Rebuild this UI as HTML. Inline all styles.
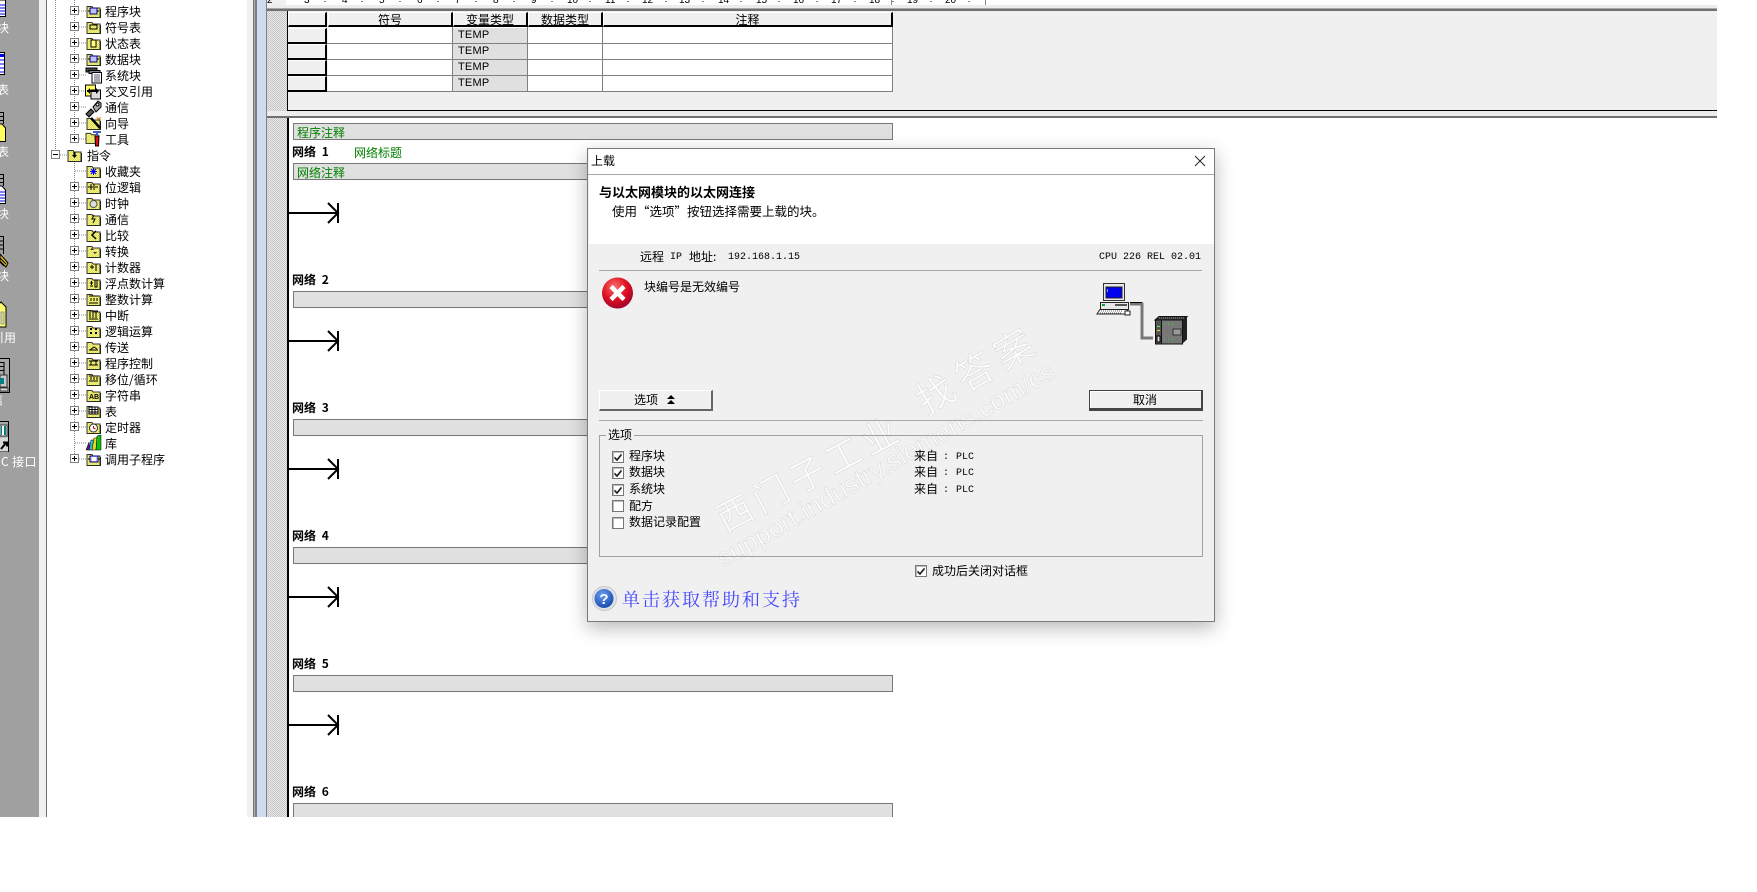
<!DOCTYPE html>
<html><head><meta charset="utf-8"><title>上载</title>
<style>
html,body{margin:0;padding:0;background:#fff}
body{width:1757px;height:892px;overflow:hidden;position:relative;font:12px/16px "WenQuanYi Zen Hei","Noto Sans CJK SC",sans-serif;color:#000}
div,span,svg{position:absolute}
.r{left:0;right:0;white-space:nowrap}
.tree span{white-space:nowrap;line-height:16px;height:16px}
.t{left:105px;margin-top:1px;white-space:nowrap}
.w{color:#fff;white-space:nowrap;line-height:16px}
.th{background:#f0f0f0;border-top:1px solid #fff;border-left:1px solid #fff;border-right:2px solid #000;border-bottom:2px solid #000;box-sizing:border-box;height:15px;text-align:center;line-height:13px;top:12px}
.rh{left:288px;width:39px;height:16px;background:#f0f0f0;border-right:2px solid #000;border-bottom:2px solid #000;border-top:1px solid #fff;box-sizing:border-box}
.temp{left:453px;width:74px;height:15px;background:#e0e0e0;font:11px/15px "Liberation Sans",sans-serif;letter-spacing:.2px;padding-left:5px;box-sizing:border-box}
.h{background:#808080;height:1px}
.v{background:#808080;width:1px}
.box{left:293px;width:600px;height:17px;background:#e0e0e0;border:1px solid #777;box-sizing:border-box}
.g{color:#008000;line-height:15px;white-space:nowrap}
.net{left:292px;font-weight:bold;white-space:nowrap;line-height:16px;word-spacing:3px}
.m{font-family:"Liberation Mono",monospace;font-size:10px;white-space:nowrap;line-height:14px}
.rd{font:10px/12px "Liberation Sans",sans-serif;top:-5px}
.dg{white-space:nowrap;line-height:16px;font-size:12px}
.cb{width:12px;height:12px;background:#fff;border:1px solid #777;box-sizing:border-box;box-shadow:inset 1px 1px 0 #bbb}
.btn{background:#f0f0f0;box-sizing:border-box;border-top:1px solid #fff;border-left:1px solid #fff;border-right:2px solid #666;border-bottom:2px solid #666;height:21px;top:390px}
.wm{color:#fcfcfc;-webkit-text-stroke:.6px #dadada;white-space:nowrap;transform-origin:0 50%}
</style></head><body>
<svg width="0" height="0" style="left:0;top:0">
<defs>
<pattern id="d" width="2" height="2" patternUnits="userSpaceOnUse"><rect width="2" height="2" fill="#ffff40"/><rect width="1" height="1" fill="#d4d49c"/><rect x="1" y="1" width="1" height="1" fill="#d4d49c"/></pattern>
<pattern id="dg" width="2" height="2" patternUnits="userSpaceOnUse"><rect width="2" height="2" fill="#c6c6c6"/><rect width="1" height="1" fill="#e8e8e8"/><rect x="1" y="1" width="1" height="1" fill="#e8e8e8"/></pattern>
<symbol id="f" viewBox="0 0 15 13"><path d="M1 3V1.500h5L7 3h7v9.500H1z" fill="url(#d)" stroke="#333"/><path d="M14.500 4v9H2" fill="none" stroke="#222"/></symbol>
</defs></svg>

<!-- left grey strip -->
<div style="left:0;top:0;width:39px;height:817px;background:#a0a0a0"></div>
<div style="left:39px;top:0;width:7px;height:817px;background:#f0f0f0"></div>
<div style="left:46px;top:0;width:1px;height:817px;background:#707070"></div>

<svg style="left:0;top:0" width="39" height="470">
<g fill="#fff" stroke="#000"><path d="M-5 0H5.500V16.500H-5z"/><path d="M-5 52.500H4.500V74.500H-5z"/></g>
<path d="M0 54h4v3H0z" fill="#00f"/>
<path d="M0 5h5M0 8h5M0 11h5M0 14h5M0 60h4M0 64h4M0 68h4M0 72h4" stroke="#00f"/>
<path d="M0 112.500h3.500V124M0 116.500h3.500M0 120.500h3.500" fill="none" stroke="#000"/>
<path d="M-3 124h5l3.500 4v13.500H-3z" fill="#ffff60" stroke="#000"/>
<path d="M0 174.500h3.500V186M0 178.500h3.500M0 182.500h3.500" fill="none" stroke="#000"/>
<path d="M-3 186h5l3.500 4v13.500H-3z" fill="#fff" stroke="#000"/>
<path d="M0 192h5M0 195h5M0 198h5M0 201h5" stroke="#00f"/>
<path d="M0 236.500h3.500V254M0 241h3.500M0 245h3.500M0 249h3.500" fill="none" stroke="#000"/>
<path d="M0 254l8 9-2 4-6-6z" fill="#e8c020" stroke="#000"/>
<path d="M0 258l6 6M0 262l4 4" stroke="#000"/>
<path d="M-3 306l4-4 5 5v20H-3z" fill="#ffff70" stroke="#000"/>
<path d="M1 312h3v12H1z" fill="#d8d890" stroke="#999"/>
<path d="M0 358.500H9.500V392.500H0" fill="#a8a8a8" stroke="#000"/>
<path d="M0 362.500h4V375M0 366.500h4M0 370.500h4" fill="none" stroke="#000"/>
<path d="M0 375h7v12H0z" fill="#c8c8c8" stroke="#333"/><path d="M0 378h4v6H0z" fill="#008080"/>
<path d="M0 388h8v3H0z" fill="#ddd" stroke="#333"/>
<path d="M0 421.500H8.500V451.500H0" fill="#a8a8a8" stroke="#000"/>
<path d="M0 425h7v11H0z" fill="#fff" stroke="#333"/><path d="M1 426h1v9H1zM4 426h2v9H4z" fill="#008080"/>
<path d="M0 437.500h8v14H0z" fill="#d8d8d8"/><path d="M1 449l5-6M3 442.500h4v4" fill="none" stroke="#000" stroke-width="2"/>
</svg>
<span class="w" style="left:-3px;top:20px">块</span>
<span class="w" style="left:-3px;top:82px">表</span>
<span class="w" style="left:-3px;top:144px">表</span>
<span class="w" style="left:-3px;top:206px">块</span>
<span class="w" style="left:-3px;top:268px">块</span>
<span class="w" style="left:-8px;top:330px">引用</span>
<span class="w" style="left:-9px;top:392px">信</span>
<span class="w" style="left:-7px;top:454px;letter-spacing:.4px">PC 接口</span>

<!-- tree -->
<div class="tree" style="left:47px;top:0;width:200px;height:817px;background:#fff"></div>
<svg style="left:47px;top:0" width="200" height="470">
<g transform="translate(-47 0)">
<path d="M55.500 0V150M55.500 155H60M74.500 0V139M74.500 163V459M60 155h7" stroke="#888" stroke-dasharray="1 1" fill="none"/>
<path d="M79 11h7M79 27h7M79 43h7M79 59h7M79 75h7M79 91h7M79 107h7M79 123h7M79 139h7M75 171h11M79 187h7M79 203h7M79 219h7M79 235h7M79 251h7M79 267h7M79 283h7M79 299h7M79 315h7M79 331h7M79 347h7M79 363h7M79 379h7M79 395h7M79 411h7M79 427h7M75 443h11M79 459h7" stroke="#888" stroke-dasharray="1 1"/>
<g fill="#fff" stroke="#808080">
<rect x="70.500" y="6.500" width="8" height="8"/><rect x="70.500" y="22.500" width="8" height="8"/><rect x="70.500" y="38.500" width="8" height="8"/><rect x="70.500" y="54.500" width="8" height="8"/><rect x="70.500" y="70.500" width="8" height="8"/><rect x="70.500" y="86.500" width="8" height="8"/><rect x="70.500" y="102.500" width="8" height="8"/><rect x="70.500" y="118.500" width="8" height="8"/><rect x="70.500" y="134.500" width="8" height="8"/>
<rect x="51.500" y="150.500" width="8" height="8"/>
<rect x="70.500" y="182.500" width="8" height="8"/><rect x="70.500" y="198.500" width="8" height="8"/><rect x="70.500" y="214.500" width="8" height="8"/><rect x="70.500" y="230.500" width="8" height="8"/><rect x="70.500" y="246.500" width="8" height="8"/><rect x="70.500" y="262.500" width="8" height="8"/><rect x="70.500" y="278.500" width="8" height="8"/><rect x="70.500" y="294.500" width="8" height="8"/><rect x="70.500" y="310.500" width="8" height="8"/><rect x="70.500" y="326.500" width="8" height="8"/><rect x="70.500" y="342.500" width="8" height="8"/><rect x="70.500" y="358.500" width="8" height="8"/><rect x="70.500" y="374.500" width="8" height="8"/><rect x="70.500" y="390.500" width="8" height="8"/><rect x="70.500" y="406.500" width="8" height="8"/><rect x="70.500" y="422.500" width="8" height="8"/><rect x="70.500" y="454.500" width="8" height="8"/>
</g>
<path stroke="#000" d="M72 10.500h5M74.500 8v5M72 26.500h5M74.500 24v5M72 42.500h5M74.500 40v5M72 58.500h5M74.500 56v5M72 74.500h5M74.500 72v5M72 90.500h5M74.500 88v5M72 106.500h5M74.500 104v5M72 122.500h5M74.500 120v5M72 138.500h5M74.500 136v5M53 154.500h5M72 186.500h5M74.500 184v5M72 202.500h5M74.500 200v5M72 218.500h5M74.500 216v5M72 234.500h5M74.500 232v5M72 250.500h5M74.500 248v5M72 266.500h5M74.500 264v5M72 282.500h5M74.500 280v5M72 298.500h5M74.500 296v5M72 314.500h5M74.500 312v5M72 330.500h5M74.500 328v5M72 346.500h5M74.500 344v5M72 362.500h5M74.500 360v5M72 378.500h5M74.500 376v5M72 394.500h5M74.500 392v5M72 410.500h5M74.500 408v5M72 426.500h5M74.500 424v5M72 458.500h5M74.500 456v5"/>
<!-- folders -->
<g>
<use href="#f" x="86" y="5" width="15" height="13"/><use href="#f" x="86" y="21" width="15" height="13"/><use href="#f" x="86" y="37" width="15" height="13"/><use href="#f" x="86" y="53" width="15" height="13"/>
<use href="#f" x="67" y="149" width="15" height="13"/>
<use href="#f" x="86" y="165" width="15" height="13"/><use href="#f" x="86" y="181" width="15" height="13"/><use href="#f" x="86" y="197" width="15" height="13"/><use href="#f" x="86" y="213" width="15" height="13"/><use href="#f" x="86" y="229" width="15" height="13"/><use href="#f" x="86" y="245" width="15" height="13"/><use href="#f" x="86" y="261" width="15" height="13"/><use href="#f" x="86" y="277" width="15" height="13"/><use href="#f" x="86" y="293" width="15" height="13"/><use href="#f" x="86" y="309" width="15" height="13"/><use href="#f" x="86" y="325" width="15" height="13"/><use href="#f" x="86" y="341" width="15" height="13"/><use href="#f" x="86" y="357" width="15" height="13"/><use href="#f" x="86" y="373" width="15" height="13"/><use href="#f" x="86" y="389" width="15" height="13"/><use href="#f" x="86" y="405" width="15" height="13"/><use href="#f" x="86" y="421" width="15" height="13"/><use href="#f" x="86" y="453" width="15" height="13"/>
</g>
<!-- folder inner glyphs -->
<path d="M90 8h7v6h-7z" fill="#c0c0ff" stroke="#000080"/><path d="M88 11h2M97 11h2" stroke="#000"/>
<path d="M90 25h7v4h-7z" fill="none" stroke="#000"/>
<path d="M91 40h5v7h-5z" fill="#ffff80" stroke="#000"/>
<path d="M90 56h7v6h-7z" fill="#c0c0ff" stroke="#000080"/><path d="M88 59h2M97 59h2" stroke="#000"/>
<path d="M72 155l2.500 3 2.500-3zM73.500 152h2v3h-2z" fill="#000"/>
<path d="M93.500 168v7M90 171.500h7M91 169l5 5M96 169l-5 5" stroke="#00f"/>
<path d="M88 187h5M91 184v6M94 184v6M95 187h3" stroke="#000" fill="none"/>
<circle cx="93.500" cy="204" r="3.500" fill="#ddd" stroke="#555"/>
<path d="M94 215l-2 4h3l-2 4" fill="none" stroke="#000"/>
<path d="M96 231l-4 4 4 4" fill="none" stroke="#000" stroke-width="1.500"/>
<path d="M90 250l2-2 2 2zM93 252h4l-2 2z" fill="#333"/>
<path d="M90 267h4M92 265v4M96 264v7" stroke="#000"/>
<path d="M90 283h3M91.500 281v4M90 286h3M95 280h2v7h-2z" stroke="#000" fill="none"/>
<path d="M89 296h9M89 303h9M91 298v3M94 298v3M97 298v3" stroke="#000"/>
<path d="M90 312v6M93 312v6M96 312v6M89 311h9M89 319h9" stroke="#000"/>
<path d="M90 328h2v2h-2zM95 328h2v2h-2zM90 332h2v2h-2zM95 332h2v2h-2z" fill="#000"/>
<path d="M90 350l4-3 3 2" stroke="#000" fill="none"/><path d="M89 350h9" stroke="#000"/>
<path d="M89 361h9M89 365h9M91 361v4M96 361v4" stroke="#000" fill="none"/>
<path d="M89 376h9M89 381h9M91 377v3M94 377v3M97 377v3" stroke="#000"/>
<text x="89" y="399" style="font:bold 7px 'Liberation Sans',sans-serif">AB</text>
<path d="M89 407h9v7h-9zM89 409.500h9M89 412h9M92 407v7M95 407v7" fill="#fff" stroke="#000"/>
<circle cx="93.500" cy="428" r="4" fill="#fff" stroke="#333"/><path d="M93.500 426v2l2 1" stroke="#c00" fill="none"/>
<path d="M90 456h8v6h-8z" fill="#c0c0ff" stroke="#000080"/><path d="M92 457h4v4h-4z" fill="#fff"/><path d="M88 459h2M98 459h2" stroke="#000"/>
<!-- system block -->
<path d="M86 68h11v4h-11z" fill="#444" stroke="#000"/>
<path d="M89 70.500h11v3h-11z" fill="#888" stroke="#000"/>
<path d="M92 72.500h9.500v10.500h-9.500z" fill="#fff" stroke="#000"/><path d="M94 75h6M94 77h6M94 79h6M94 81h6" stroke="#557"/>
<!-- cross ref -->
<path d="M85.500 85h10v11h-10z" fill="#ffff60" stroke="#000"/><path d="M91 90h9.500v9H91z" fill="#ddd" stroke="#000"/>
<path d="M87 91h11" stroke="#000" stroke-width="2"/><path d="M90 88l-3 3 3 3zM96 88l3 3-3 3z" fill="#000"/>
<!-- comm -->
<path d="M86 114l5-5 3 3-5 5z" fill="#555" stroke="#000"/><path d="M93 107l5-6 3 2 0 4-5 5z" fill="#aaa" stroke="#000"/><circle cx="97.500" cy="104.500" r="1.500" fill="#fff" stroke="#000"/>
<!-- wizard -->
<use href="#f" x="86" y="117" width="15" height="13"/><path d="M91 118l9 10" stroke="#000" stroke-width="2.500"/><path d="M97 117l1 2 2-1-1 2" stroke="#c80" fill="none"/>
<!-- tools -->
<use href="#f" x="85" y="132" width="14" height="12"/><path d="M95 136h4l-.5 10h-3z" fill="#e01010" stroke="#000"/><path d="M93 132h8M97 131v5" stroke="#4060c0" stroke-width="2"/>
<!-- lib -->
<path d="M86 450l3-8 1 8z" fill="#800080" stroke="#000" stroke-width=".5"/><path d="M89 450l2-10h3l-1 10z" fill="#20c0d0" stroke="#000" stroke-width=".5"/><path d="M92 450l2-12h3l-1 12z" fill="#e8d820" stroke="#000" stroke-width=".5"/><path d="M96 450l1-14 4-1v15z" fill="#10c010" stroke="#000" stroke-width=".5"/>
</g></svg>
<span class="t" style="top:3px">程序块</span>
<span class="t" style="top:19px">符号表</span>
<span class="t" style="top:35px">状态表</span>
<span class="t" style="top:51px">数据块</span>
<span class="t" style="top:67px">系统块</span>
<span class="t" style="top:83px">交叉引用</span>
<span class="t" style="top:99px">通信</span>
<span class="t" style="top:115px">向导</span>
<span class="t" style="top:131px">工具</span>
<span style="left:87px;top:148px;white-space:nowrap">指令</span>
<span class="t" style="top:163px">收藏夹</span>
<span class="t" style="top:179px">位逻辑</span>
<span class="t" style="top:195px">时钟</span>
<span class="t" style="top:211px">通信</span>
<span class="t" style="top:227px">比较</span>
<span class="t" style="top:243px">转换</span>
<span class="t" style="top:259px">计数器</span>
<span class="t" style="top:275px">浮点数计算</span>
<span class="t" style="top:291px">整数计算</span>
<span class="t" style="top:307px">中断</span>
<span class="t" style="top:323px">逻辑运算</span>
<span class="t" style="top:339px">传送</span>
<span class="t" style="top:355px">程序控制</span>
<span class="t" style="top:371px">移位/循环</span>
<span class="t" style="top:387px">字符串</span>
<span class="t" style="top:403px">表</span>
<span class="t" style="top:419px">定时器</span>
<span class="t" style="top:435px">库</span>
<span class="t" style="top:451px">调用子程序</span>

<!-- splitters -->
<div style="left:247px;top:0;width:6px;height:817px;background:#f0f0f0"></div>
<div style="left:253px;top:0;width:4px;height:817px;background:linear-gradient(90deg,#777 0,#777 25%,#aaa 25%,#aaa 50%,#808080 50%)"></div>
<div style="left:257px;top:0;width:9px;height:817px;background:#cddcee"></div>
<div style="left:266px;top:0;width:1px;height:817px;background:#808080"></div>
<svg style="left:267px;top:10px" width="20" height="807"><rect width="20" height="807" fill="url(#dg)"/></svg>

<!-- ruler -->
<div style="left:267px;top:0;width:19px;height:5px;background:#f0f0f0"></div>
<div style="left:286px;top:0;width:699px;height:5px;background:#fff;border-right:1px solid #888"></div>
<div style="left:891px;top:0;width:1px;height:5px;background:#888"></div>
<span class="rd" style="left:267px">2</span><span class="rd" style="left:304px">3</span><span class="rd" style="left:342px">4</span><span class="rd" style="left:379px">5</span><span class="rd" style="left:417px">6</span><span class="rd" style="left:455px">7</span><span class="rd" style="left:493px">8</span><span class="rd" style="left:531px">9</span><span class="rd" style="left:567px">10</span><span class="rd" style="left:605px">11</span><span class="rd" style="left:642px">12</span><span class="rd" style="left:679px">13</span><span class="rd" style="left:718px">14</span><span class="rd" style="left:756px">15</span><span class="rd" style="left:793px">16</span><span class="rd" style="left:831px">17</span><span class="rd" style="left:869px">18</span><span class="rd" style="left:907px">19</span><span class="rd" style="left:945px">20</span>
<svg style="left:286px;top:0" width="700" height="5"><path d="M39 1v1M76 1v1M114 1v1M152 1v1M190 1v1M228 1v1M266 1v1M304 1v1M342 1v1M380 1v1M417 1v1M455 1v1M493 1v1M531 1v1M569 1v1M607 1v1M645 1v1M683 1v1" stroke="#000"/></svg>
<div style="left:267px;top:5px;width:1450px;height:3px;background:#ececec"></div>
<div style="left:267px;top:8px;width:1450px;height:1px;background:#aaa"></div>
<div style="left:267px;top:9px;width:1450px;height:2px;background:#707070"></div>

<!-- upper panel -->
<div style="left:287px;top:11px;width:1430px;height:99px;background:#f0f0f0"></div>
<div style="left:287px;top:11px;width:1px;height:100px;background:#000"></div>
<div style="left:287px;top:110px;width:1430px;height:1px;background:#000"></div>
<div style="left:267px;top:111px;width:1450px;height:5px;background:#ececec"></div>
<div style="left:267px;top:116px;width:1450px;height:2px;background:#707070"></div>
<div style="left:287px;top:118px;width:2px;height:699px;background:#000"></div>

<!-- table -->
<div style="left:328px;top:27px;width:565px;height:64px;background:#fff"></div>
<div class="th" style="left:288px;width:39px"></div>
<div class="th" style="left:328px;width:125px">符号</div>
<div class="th" style="left:453px;width:75px">变量类型</div>
<div class="th" style="left:528px;width:75px">数据类型</div>
<div class="th" style="left:603px;width:290px">注释</div>
<div class="rh" style="top:28px"></div><div class="rh" style="top:44px"></div><div class="rh" style="top:60px"></div><div class="rh" style="top:76px"></div>
<div class="temp" style="top:28px">TEMP</div><div class="temp" style="top:44px">TEMP</div><div class="temp" style="top:60px">TEMP</div><div class="temp" style="top:76px">TEMP</div>
<div class="h" style="left:327px;top:43px;width:566px"></div><div class="h" style="left:327px;top:59px;width:566px"></div><div class="h" style="left:327px;top:75px;width:566px"></div><div class="h" style="left:327px;top:91px;width:566px"></div>
<div class="v" style="left:452px;top:27px;height:65px"></div><div class="v" style="left:527px;top:27px;height:65px"></div><div class="v" style="left:602px;top:27px;height:65px"></div><div class="v" style="left:892px;top:27px;height:65px"></div>

<!-- networks -->
<div class="box" style="top:123px"></div>
<span class="g" style="left:297px;top:125px">程序注释</span>
<span class="net" style="top:144px">网络 1</span>
<span class="g" style="left:354px;top:145px">网络标题</span>
<div class="box" style="top:163px"></div>
<span class="g" style="left:297px;top:165px">网络注释</span>
<svg style="left:288px;top:200px" width="60" height="30"><path d="M0 13H50M50 3V23M40 3L50 13L40 23" fill="none" stroke="#000" stroke-width="2"/></svg>
<span class="net" style="top:272px">网络 2</span>
<div class="box" style="top:291px"></div>
<svg style="left:288px;top:328px" width="60" height="30"><path d="M0 13H50M50 3V23M40 3L50 13L40 23" fill="none" stroke="#000" stroke-width="2"/></svg>
<span class="net" style="top:400px">网络 3</span>
<div class="box" style="top:419px"></div>
<svg style="left:288px;top:456px" width="60" height="30"><path d="M0 13H50M50 3V23M40 3L50 13L40 23" fill="none" stroke="#000" stroke-width="2"/></svg>
<span class="net" style="top:528px">网络 4</span>
<div class="box" style="top:547px"></div>
<svg style="left:288px;top:584px" width="60" height="30"><path d="M0 13H50M50 3V23M40 3L50 13L40 23" fill="none" stroke="#000" stroke-width="2"/></svg>
<span class="net" style="top:656px">网络 5</span>
<div class="box" style="top:675px"></div>
<svg style="left:288px;top:712px" width="60" height="30"><path d="M0 13H50M50 3V23M40 3L50 13L40 23" fill="none" stroke="#000" stroke-width="2"/></svg>
<span class="net" style="top:784px">网络 6</span>
<div class="box" style="top:803px;height:14px;border-bottom:0"></div>
<div style="left:0;top:817px;width:1757px;height:75px;background:#fff"></div>

<!-- dialog -->
<div style="left:587px;top:148px;width:628px;height:474px;background:#f0f0f0;border:1px solid #7a7a7a;box-sizing:border-box;box-shadow:0 6px 18px rgba(0,0,0,.28);overflow:hidden">
  <div style="left:1px;top:0;width:626px;height:95px;background:#fff"></div>
  <div style="left:0;top:25px;width:627px;height:1px;background:#a8a8a8"></div>
  <span class="wm" style="left:131px;top:396px;font:26.500px/30px 'Liberation Sans',sans-serif;transform:rotate(-29.800deg)">support.industry.siemens.com/cs</span>
  <span class="wm" style="left:130px;top:349px;font:36px/44px 'Noto Sans CJK SC',sans-serif;letter-spacing:5px;transform:rotate(-28deg)">西门子工业</span>
  <span class="wm" style="left:330px;top:231px;font:38px/44px 'Noto Sans CJK SC',sans-serif;letter-spacing:7px;transform:rotate(-30deg)">找答案</span>
</div>
<span class="dg" style="left:591px;top:153px">上载</span>
<svg style="left:1194px;top:155px" width="12" height="12"><path d="M1 1L11 11M11 1L1 11" stroke="#222" stroke-width="1"/></svg>
<span class="dg" style="left:599px;top:184px;font-weight:bold;font-size:13px">与以太网模块的以太网连接</span>
<span class="dg" style="left:612px;top:203px;font-size:12.500px">使用“选项”按钮选择需要上载的块。</span>
<span class="dg" style="left:640px;top:249px">远程</span>
<span class="m" style="left:670px;top:251px">IP</span>
<span class="dg" style="left:689px;top:249px">地址:</span>
<span class="m" style="left:728px;top:251px">192.168.1.15</span>
<span class="m" style="left:1099px;top:251px">CPU 226 REL 02.01</span>
<div style="left:599px;top:270px;width:603px;height:1px;background:#a8a8a8"></div>

<svg style="left:601px;top:276px" width="34" height="34"><defs><radialGradient id="e" cx=".4" cy=".3" r=".8"><stop offset="0" stop-color="#f87070"/><stop offset=".5" stop-color="#e01020"/><stop offset="1" stop-color="#900030"/></radialGradient></defs><circle cx="16.500" cy="17" r="15.500" fill="url(#e)"/><path d="M10 10.500L23 23.500M23 10.500L10 23.500" stroke="#fff" stroke-width="4.500"/></svg>
<span class="dg" style="left:644px;top:279px">块编号是无效编号</span>

<svg style="left:1095px;top:280px" width="100" height="70">
<path d="M8.500 3.500h21v17h-21z" fill="#e8e8e8" stroke="#333"/><path d="M11 7h16v11H11z" fill="#0000f0" stroke="#222"/><path d="M12 9h1v3h-1z" fill="#60a0ff"/>
<path d="M5.500 22.500h28v7h-28z" fill="#e8e8e8" stroke="#222"/><path d="M7 24h3v2H7z" fill="#10a040"/><path d="M20 24h12v2H20z" fill="#555"/>
<path d="M5 29.500h28l-3 4.500H2z" fill="#fff" stroke="#222"/><path d="M6 31h22M5 33h22" stroke="#666" stroke-dasharray="1 1"/>
<path d="M30 31h5v4h-5z" fill="#fff" stroke="#222"/>
<path d="M35 24H47V58H58" fill="none" stroke="#777" stroke-width="3"/><path d="M35 22.500H47" stroke="#000" stroke-width="1"/>
<path d="M60 40l4-3.500h28l-5 3.500z" fill="#333" stroke="#111"/><path d="M87 40l5-3.500v23l-5 4.500z" fill="#222"/>
<path d="M60.500 40h27v24h-27z" fill="#777" stroke="#111"/><path d="M60.500 40h6v24h-6z" fill="#555" stroke="#111"/>
<path d="M62 46h3v1h-3z" fill="#4f4"/><path d="M62 50h3v1h-3z" fill="#fd0"/><path d="M62 56h3v6h-3z" fill="#ddd" stroke="#000"/>
<path d="M69 44h9M69 59h9" stroke="#2e2" stroke-dasharray="1 3"/><path d="M78 49h8v6h-8z" fill="#999" stroke="#333"/><path d="M64 38h26" stroke="#999" stroke-dasharray="1 1"/>
</svg>

<div class="btn" style="left:599px;width:114px"></div>
<span class="dg" style="left:634px;top:392px">选项</span>
<svg style="left:666px;top:394px" width="10" height="12"><path d="M5 1L9 5H1zM5 6L9 10H1z" fill="#000"/></svg>
<div class="btn" style="left:1089px;width:114px;border:1px solid #444;border-right-width:2px;border-bottom-width:3px;box-shadow:inset 1px 1px 0 #fff"></div>
<span class="dg" style="left:1133px;top:392px">取消</span>
<div style="left:599px;top:420px;width:604px;height:1px;background:#a8a8a8"></div>

<div style="left:599px;top:435px;width:604px;height:122px;border:1px solid #a0a0a0;box-sizing:border-box"></div>
<span class="dg" style="left:606px;top:427px;background:#f0f0f0;padding:0 2px">选项</span>

<div class="cb" style="left:612px;top:451px"></div><div class="cb" style="left:612px;top:467px"></div><div class="cb" style="left:612px;top:484px"></div><div class="cb" style="left:612px;top:500px"></div><div class="cb" style="left:612px;top:517px"></div>
<svg style="left:612px;top:451px" width="12" height="50"><path d="M2.500 6L5 8.500L9.500 3M2.500 7L5 9.500L9.500 4M2.500 22L5 24.500L9.500 19M2.500 23L5 25.500L9.500 20M2.500 39L5 41.500L9.500 36M2.500 40L5 42.500L9.500 37" fill="none" stroke="#222"/></svg>
<span class="dg" style="left:629px;top:448px">程序块</span>
<span class="dg" style="left:629px;top:464px">数据块</span>
<span class="dg" style="left:629px;top:481px">系统块</span>
<span class="dg" style="left:629px;top:498px">配方</span>
<span class="dg" style="left:629px;top:514px">数据记录配置</span>
<span class="dg" style="left:914px;top:448px">来自</span><span class="m" style="left:943px;top:451px">:</span><span class="m" style="left:956px;top:451px">PLC</span>
<span class="dg" style="left:914px;top:464px">来自</span><span class="m" style="left:943px;top:467px">:</span><span class="m" style="left:956px;top:467px">PLC</span>
<span class="dg" style="left:914px;top:481px">来自</span><span class="m" style="left:943px;top:484px">:</span><span class="m" style="left:956px;top:484px">PLC</span>

<div class="cb" style="left:915px;top:565px"></div>
<svg style="left:915px;top:565px" width="12" height="12"><path d="M2.500 6L5 8.500L9.500 3M2.500 7L5 9.500L9.500 4" fill="none" stroke="#222"/></svg>
<span class="dg" style="left:932px;top:563px">成功后关闭对话框</span>

<svg style="left:592px;top:586px" width="25" height="25"><defs><radialGradient id="h" cx=".4" cy=".3" r=".8"><stop offset="0" stop-color="#6a9cf0"/><stop offset="1" stop-color="#1040a8"/></radialGradient></defs><circle cx="12.500" cy="12.500" r="12" fill="#dfe3e8" stroke="#c8c8c8"/><circle cx="12" cy="12.500" r="9.500" fill="url(#h)"/><text x="12" y="18" text-anchor="middle" style="font:bold 15px 'Liberation Sans',sans-serif;fill:#fff">?</text></svg>
<span style="left:622px;top:588px;font:18px/22px 'Noto Serif CJK SC',serif;letter-spacing:2px;color:#4646ff;white-space:nowrap">单击获取帮助和支持</span>
</body></html>
